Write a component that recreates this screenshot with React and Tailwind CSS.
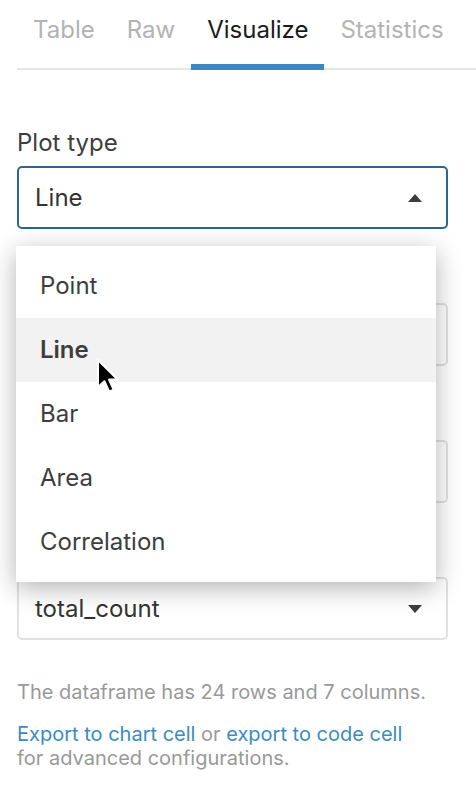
import React from 'react';

const TABS = ['Table', 'Raw', 'Visualize', 'Statistics'];
const OPTIONS = ['Point', 'Line', 'Bar', 'Area', 'Correlation'];

function Caret({ up }) {
  return (
    <svg width="14" height="8" viewBox="0 0 14 8" className="shrink-0">
      <path d={up ? 'M0 8 L7 0 L14 8 Z' : 'M0 0 L7 8 L14 0 Z'} fill="#3d3d3d" />
    </svg>
  );
}

// label + select box; label/value may be empty where the open menu hides them
function Field({ label, value, active, children }) {
  return (
    <div className="relative mt-[35px] first:mt-0">
      <div className="h-[32px] text-[24px] leading-[32px] text-[#3d3d3d]">{label}</div>
      <div
        className={
          active
            ? 'mt-[7px] flex h-[63px] w-[431px] items-center justify-between rounded-[5px] border-2 border-[#2b6590] pl-[16px] pr-[24px]'
            : 'mt-[7px] flex h-[63px] w-[431px] items-center justify-between rounded-[5px] border-2 border-[#e1e1e1] pl-[16px] pr-[24px]'
        }
      >
        <span className="text-[24px] text-[#333]">{value}</span>
        <Caret up={active} />
      </div>
      {children}
    </div>
  );
}

export default function App() {
  return (
    <div className="relative h-[794px] w-[476px] overflow-hidden bg-white font-['Inter',sans-serif]">
      {/* tab bar */}
      <div className="ml-[17px] flex h-[70px] border-b-2 border-[#e6e6e6]">
        {TABS.map(t => (
          <div
            key={t}
            className={
              t === 'Visualize'
                ? '-mb-[2px] flex items-start border-b-[6px] border-[#3a89bd] px-[16px] pt-[14px] text-[24px] leading-[32px] text-[#1a1a1a]'
                : 'flex items-start px-[16px] pt-[14px] text-[24px] leading-[32px] text-[#b3b3b3]'
            }
          >
            {t}
          </div>
        ))}
      </div>

      <div className="pl-[17px] pt-[57px]">
        <Field label="Plot type" value="Line" active>
          {/* open dropdown */}
          <div className="absolute left-[-1px] top-[119px] z-10 w-[420px] bg-white py-[8px] shadow-[0_6px_24px_rgba(0,0,0,0.3)]">
            {OPTIONS.map(o => (
              <div
                key={o}
                className={
                  o === 'Line'
                    ? 'flex h-[64px] items-center bg-[#f2f2f2] pl-[24px] text-[24px] font-semibold text-[#3d3d3d]'
                    : 'flex h-[64px] items-center pl-[24px] text-[24px] text-[#3d3d3d]'
                }
              >
                {o}
              </div>
            ))}
          </div>
        </Field>
        <Field />
        <Field />
        <Field value="total_count" />

        <p className="mt-[40px] text-[20px] leading-[24px] text-[#999]">
          The dataframe has 24 rows and 7 columns.
        </p>
        <p className="mt-[18px] text-[20px] leading-[24px] text-[#999]">
          <span className="text-[#3a8cc0]">Export to chart cell</span> or{' '}
          <span className="text-[#3a8cc0]">export to code cell</span>
          <br />
          for advanced configurations.
        </p>
      </div>

      {/* mouse pointer */}
      <svg className="absolute left-[96px] top-[358px] z-20" width="26" height="36" viewBox="0 0 13 18">
        <path
          d="M1 1 L1 14.5 L4.2 11.6 L6.6 16.8 L8.8 15.8 L6.5 10.8 L10.8 10.8 Z"
          fill="#000"
          stroke="#fff"
          strokeWidth="1"
          strokeLinejoin="round"
        />
      </svg>
    </div>
  );
}
